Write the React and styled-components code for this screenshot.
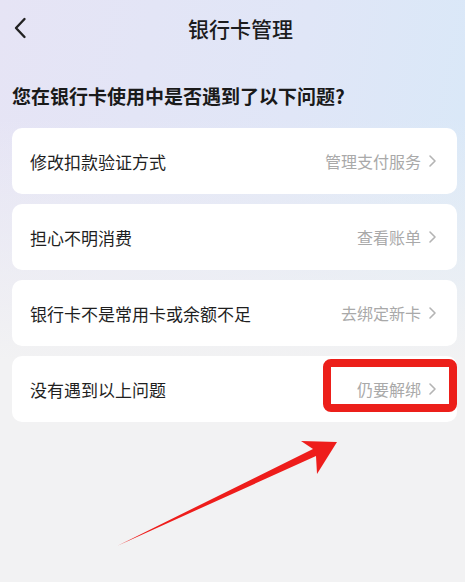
import React from 'react'
import styled, { createGlobalStyle } from 'styled-components'

const GlobalStyle = createGlobalStyle`
  html, body {
    margin: 0;
    padding: 0;
  }
  body {
    font-family: "Noto Sans CJK SC", "Noto Sans", sans-serif;
  }
`

const rows = [
  { label: '修改扣款验证方式', action: '管理支付服务' },
  { label: '担心不明消费', action: '查看账单' },
  { label: '银行卡不是常用卡或余额不足', action: '去绑定新卡' },
  { label: '没有遇到以上问题', action: '仍要解绑', marked: true },
]

export default function App() {
  return <Page>
    <GlobalStyle />

    <Header>
      <BackButton>
        <svg width="14" height="22" viewBox="0 0 14 22">
          <path d="M11.5 2 L3 11 L11.5 20" fill="none" stroke="#222" strokeWidth="2.4" strokeLinecap="round" strokeLinejoin="round" />
        </svg>
      </BackButton>
      <Title>银行卡管理</Title>
    </Header>

    <Question>您在银行卡使用中是否遇到了以下问题?</Question>

    <List>
      {rows.map(row => (
        <Card key={row.label}>
          <Label>{row.label}</Label>
          <Action>
            {row.action}
            <svg width="9" height="14" viewBox="0 0 9 14">
              <path d="M2 2 L7 7 L2 12" fill="none" stroke="#b4b4b4" strokeWidth="1.6" strokeLinecap="round" strokeLinejoin="round" />
            </svg>
          </Action>
          {row.marked && <Highlight />}
        </Card>
      ))}
    </List>

    <Arrow width="465" height="582" viewBox="0 0 465 582">
      <polygon
        points="117,546 313,449 301,441 337,442 317,474 316,456"
        fill="#ee1d1b"
      />
    </Arrow>
  </Page>
}

const Page = styled.div`
  position: relative;
  width: 465px;
  height: 582px;
  overflow: hidden;
  background:
    linear-gradient(180deg, rgba(242, 242, 243, 0) 0%, rgba(242, 242, 243, 0) 20%, #f2f2f3 62%),
    linear-gradient(100deg, #e6e4f5 0%, #e0e6f7 55%, #d7e9f8 100%);
`

const Header = styled.div`
  position: relative;
  height: 56px;
  display: flex;
  align-items: center;
  justify-content: center;
`

const BackButton = styled.div`
  position: absolute;
  left: 13px;
  top: 17px;
  display: flex;
`

const Title = styled.div`
  font-size: 21px;
  font-weight: 500;
  color: #1c1c1e;
  margin-left: 16px;
`

const Question = styled.div`
  margin: 28px 0 0 12px;
  height: 24px;
  line-height: 24px;
  font-size: 19px;
  font-weight: 700;
  color: #1a1a1a;
`

const List = styled.div`
  margin: 20px 8px 0 12px;
  display: flex;
  flex-direction: column;
  gap: 10px;
`

const Card = styled.div`
  position: relative;
  height: 66px;
  border-radius: 10px;
  background: #ffffff;
  display: flex;
  align-items: center;
  justify-content: space-between;
  padding: 0 20px 0 18px;
`

const Label = styled.div`
  font-size: 17px;
  color: #1f1f1f;
`

const Action = styled.div`
  display: flex;
  align-items: center;
  gap: 7px;
  font-size: 16px;
  color: #a9a9a9;
`

const Highlight = styled.div`
  position: absolute;
  top: 3px;
  right: 0;
  width: 134px;
  height: 53px;
  box-sizing: border-box;
  border: 8px solid #ec1f1a;
  border-radius: 8px;
`

const Arrow = styled.svg`
  position: absolute;
  left: 0;
  top: 0;
  pointer-events: none;
`
